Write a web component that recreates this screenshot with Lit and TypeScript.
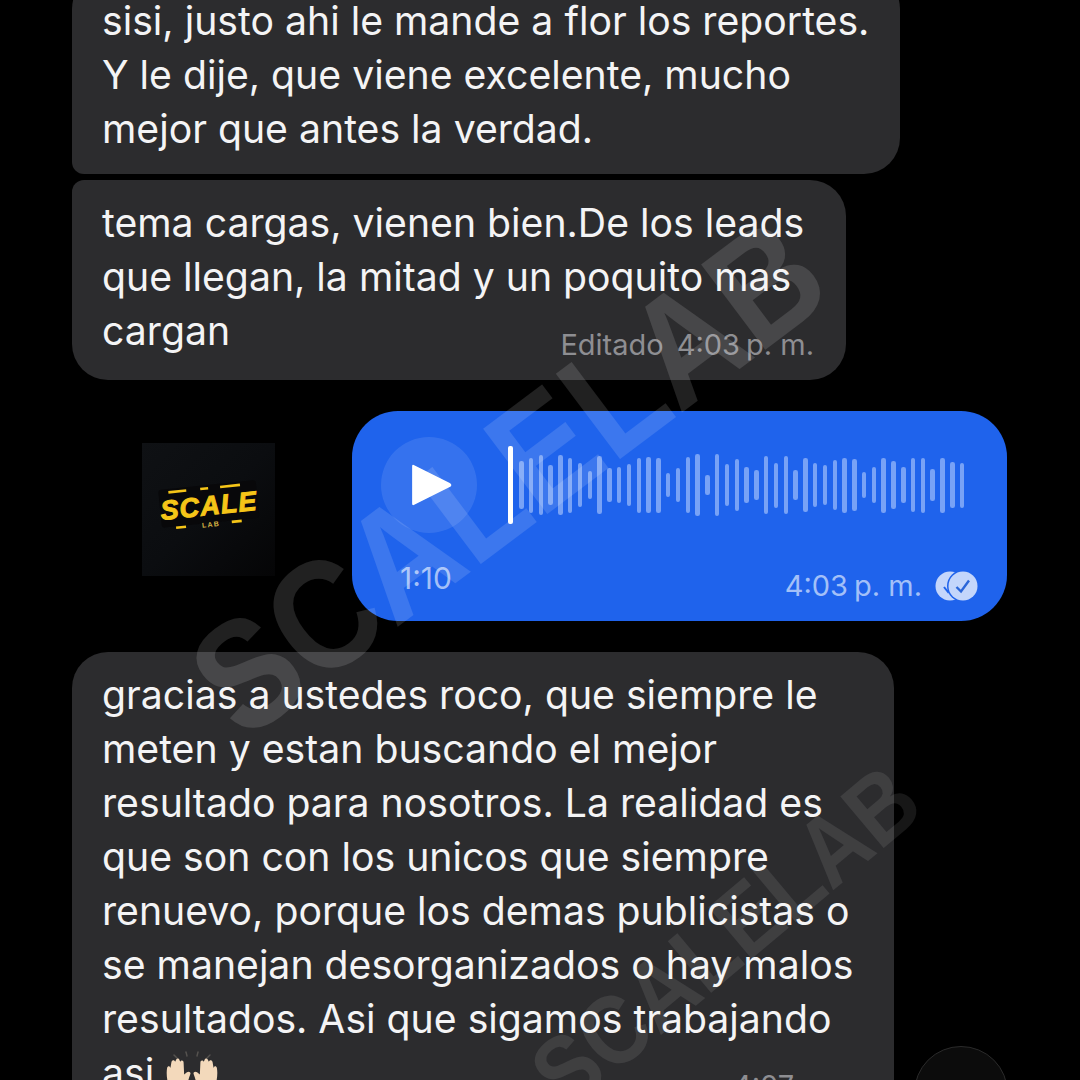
import { LitElement, html, css, svg } from "lit";
import { customElement } from "lit/decorators.js";

const BARS = [145,165,180,118,178,165,130,85,172,100,108,125,165,170,165,70,100,170,188,62,188,128,158,110,92,176,135,172,88,163,130,118,152,165,155,78,107,165,143,108,163,165,95,165,140,135];

@customElement("app-root")
export class AppRoot extends LitElement {
  static styles = css`
    :host { display: block; width: 1080px; height: 1080px; overflow: hidden; background: #000; position: relative; font-family: Inter, "Liberation Sans", sans-serif; color: #f4f4f5; }
    .thread { display: flex; flex-direction: column; padding: 0 73px 0 72px; margin-top: -27px; }
    .bubble { position: relative; background: #2c2c2e; border-radius: 36px; padding: 16px 28px 18px 30px; font-size: 39.2px; line-height: 54px; white-space: nowrap; box-sizing: border-box; }
    .b1 { width: 828px; padding-top: 21px; border-bottom-left-radius: 12px; }
    .b2 { width: 774px; margin-top: 6px; padding-bottom: 22px; border-top-left-radius: 12px; }
    .b3 { width: 822px; margin-top: 31px; height: 500px; }
    .meta { position: absolute; right: 32px; bottom: 17px; font-size: 29px; line-height: 36px; color: #8e8e92; }
    .sp { margin-left: 13px; }
    .sm { margin-left: 6px; }
    .tm { margin-right: 6px; }
    .row { display: flex; align-items: flex-start; gap: 77px; margin: 31px 0 0 70px; }
    .logo { width: 133px; height: 133px; display: block; flex: none; margin-top: 32px; }
    .audio { position: relative; flex: none; width: 655px; height: 210px; background: #1f63ec; border-radius: 46px; box-sizing: border-box; padding: 26px 43px 0 29px; }
    .top { display: flex; align-items: center; height: 96px; }
    .play { width: 96px; height: 96px; border-radius: 50%; background: rgba(255,255,255,.1); display: flex; align-items: center; justify-content: center; flex: none; }
    .play svg { display: block; margin-left: 6px; }
    .head { width: 5px; height: 78px; background: #fff; border-radius: 2px; margin: 0 6px 0 31px; flex: none; }
    .wave { display: flex; align-items: center; gap: 5.3px; height: 78px; }
    .bar { width: 4.5px; border-radius: 2.25px; background: #78a2f6; flex: none; }
    .dur { position: absolute; left: 48px; bottom: 25px; font-size: 30px; line-height: 36px; color: #a3c0f8; }
    .ameta { position: absolute; right: 29px; bottom: 17px; display: flex; align-items: center; gap: 13px; font-size: 29px; line-height: 36px; color: #a3c0f8; }
    .ameta svg { display: block; }
    .emoji { display: inline-block; vertical-align: -9px; margin-left: 0; }
    .ts { position: absolute; left: 661px; top: 416px; font-size: 29px; line-height: 36px; color: #8e8e92; }
    .fab { position: absolute; left: 914px; top: 1046px; width: 94px; height: 94px; border-radius: 50%; background: #0c0c0c; border: 1px solid #2a2a2a; box-sizing: border-box; }
    .wm { position: absolute; font-family: "Liberation Sans", sans-serif; font-weight: 700; white-space: nowrap; transform-origin: 0 100%; pointer-events: none; line-height: 1; }
    .wm1 { left: 258px; top: 607px; font-size: 155px; color: rgba(255,255,255,.13); transform: rotate(-37deg) scaleX(.88); }
    .wm2 { left: 577px; top: 1027px; font-size: 98px; color: rgba(255,255,255,.09); transform: rotate(-40deg) scaleX(.88); }
  `;

  private logo() {
    return html`<svg class="logo" viewBox="0 0 133 133">
      <defs><linearGradient id="lg" x1="0" y1="0" x2="1" y2="1"><stop offset="0" stop-color="#0f1114"/><stop offset=".5" stop-color="#0b0d10"/><stop offset="1" stop-color="#050506"/></linearGradient></defs>
      <rect width="133" height="133" fill="url(#lg)"/>
      <g transform="rotate(-6 66 63)">
        <rect x="18" y="42" width="98" height="38" rx="3" fill="#08080a"/>
        <g fill="#f5c518">
          <rect x="28" y="44" width="18" height="2.6"/><rect x="60" y="44" width="8" height="2.6"/><rect x="80" y="44" width="20" height="2.6"/>
          <rect x="32" y="80" width="10" height="2.6"/><rect x="88" y="80" width="10" height="2.6"/>
        </g>
        <text x="67" y="72" text-anchor="middle" font-family="'Liberation Sans',sans-serif" font-weight="700" font-style="italic" font-size="27" letter-spacing="1.2" fill="#f5c518" stroke="#f5c518" stroke-width="1">SCALE</text>
        <text x="67" y="84" text-anchor="middle" font-family="'Liberation Sans',sans-serif" font-weight="700" font-size="7" letter-spacing="1.2" fill="#d9b545">LAB</text>
      </g>
    </svg>`;
  }

  private hands() {
    const hand = svg`<path d="M4 30 C1 22 0 15 1 9 C1.5 7 3.5 7 4 9 L5 3.5 C5.5 1.5 8 1.5 8.3 3.5 L9 2 C9.6 0 12 0 12.3 2 L13 3.5 C13.6 1.5 16 1.8 16 4 L16.5 15 L19 13 C21 11.5 23 13 22 15 C20 20 19 26 18 30 Z" fill="#f3d9bb"/>`;
    return html`<svg class="emoji" width="54" height="46" viewBox="0 0 54 46">
      <g stroke="#55524f" stroke-width="1.4" stroke-linecap="round"><path d="M9 5 L12 8"/><path d="M21 2 L22 6"/><path d="M33 2 L32 6"/><path d="M45 5 L42 8"/></g>
      <g transform="translate(1 8) scale(1.1)">${hand}</g>
      <g transform="translate(53 8) scale(-1.1 1.1)">${hand}</g>
    </svg>`;
  }

  private lines(ls: string[]) { return ls.map((l) => html`<div>${l}</div>`); }

  render() {
    return html`
      <div class="thread">
        <div class="bubble b1">${this.lines(["sisi, justo ahi le mande a flor los reportes.", "Y le dije, que viene excelente, mucho", "mejor que antes la verdad."])}</div>
        <div class="bubble b2">
          ${this.lines(["tema cargas, vienen bien.De los leads", "que llegan, la mitad y un poquito mas", "cargan"])}
          <div class="meta">Editado<span class="sp">4:03</span><span class="sm">p. m.</span></div>
        </div>
        <div class="row">
          ${this.logo()}
          <div class="audio">
            <div class="top">
              <div class="play"><svg width="42" height="46" viewBox="0 0 40 44"><path d="M3 3 L37 20 Q40 22 37 24 L3 41 Q1 42 1 40 V4 Q1 2 3 3Z" fill="#fff"/></svg></div>
              <div class="head"></div>
              <div class="wave">${BARS.map((h) => html`<div class="bar" style="height:${(h / 3).toFixed(1)}px"></div>`)}</div>
            </div>
            <div class="dur">1:10</div>
            <div class="ameta">
              <span><span class="tm">4:03</span>p. m.</span>
              <svg width="43" height="30" viewBox="0 0 43 30">
                <circle cx="15" cy="15" r="14.5" fill="#c4d6fb"/>
                <path d="M9 16 L13 21 L19 10" fill="none" stroke="#1f63ec" stroke-width="2"/>
                <circle cx="28" cy="15" r="16" fill="#1f63ec"/>
                <circle cx="28" cy="15" r="14.5" fill="#c4d6fb"/>
                <path d="M21.5 16 L26 20.5 L34 9.5" fill="none" stroke="#2b66d9" stroke-width="2.4"/>
              </svg>
            </div>
          </div>
        </div>
        <div class="bubble b3">
          ${this.lines(["gracias a ustedes roco, que siempre le", "meten y estan buscando el mejor", "resultado para nosotros. La realidad es", "que son con los unicos que siempre", "renuevo, porque los demas publicistas o", "se manejan desorganizados o hay malos", "resultados. Asi que sigamos trabajando"])}
          <div>asi ${this.hands()}</div>
          <div class="ts">4:07</div>
        </div>
      </div>
      <div class="fab"></div>
      <div class="wm wm1">SCALELAB</div>
      <div class="wm wm2">SCALELAB</div>
    `;
  }
}
